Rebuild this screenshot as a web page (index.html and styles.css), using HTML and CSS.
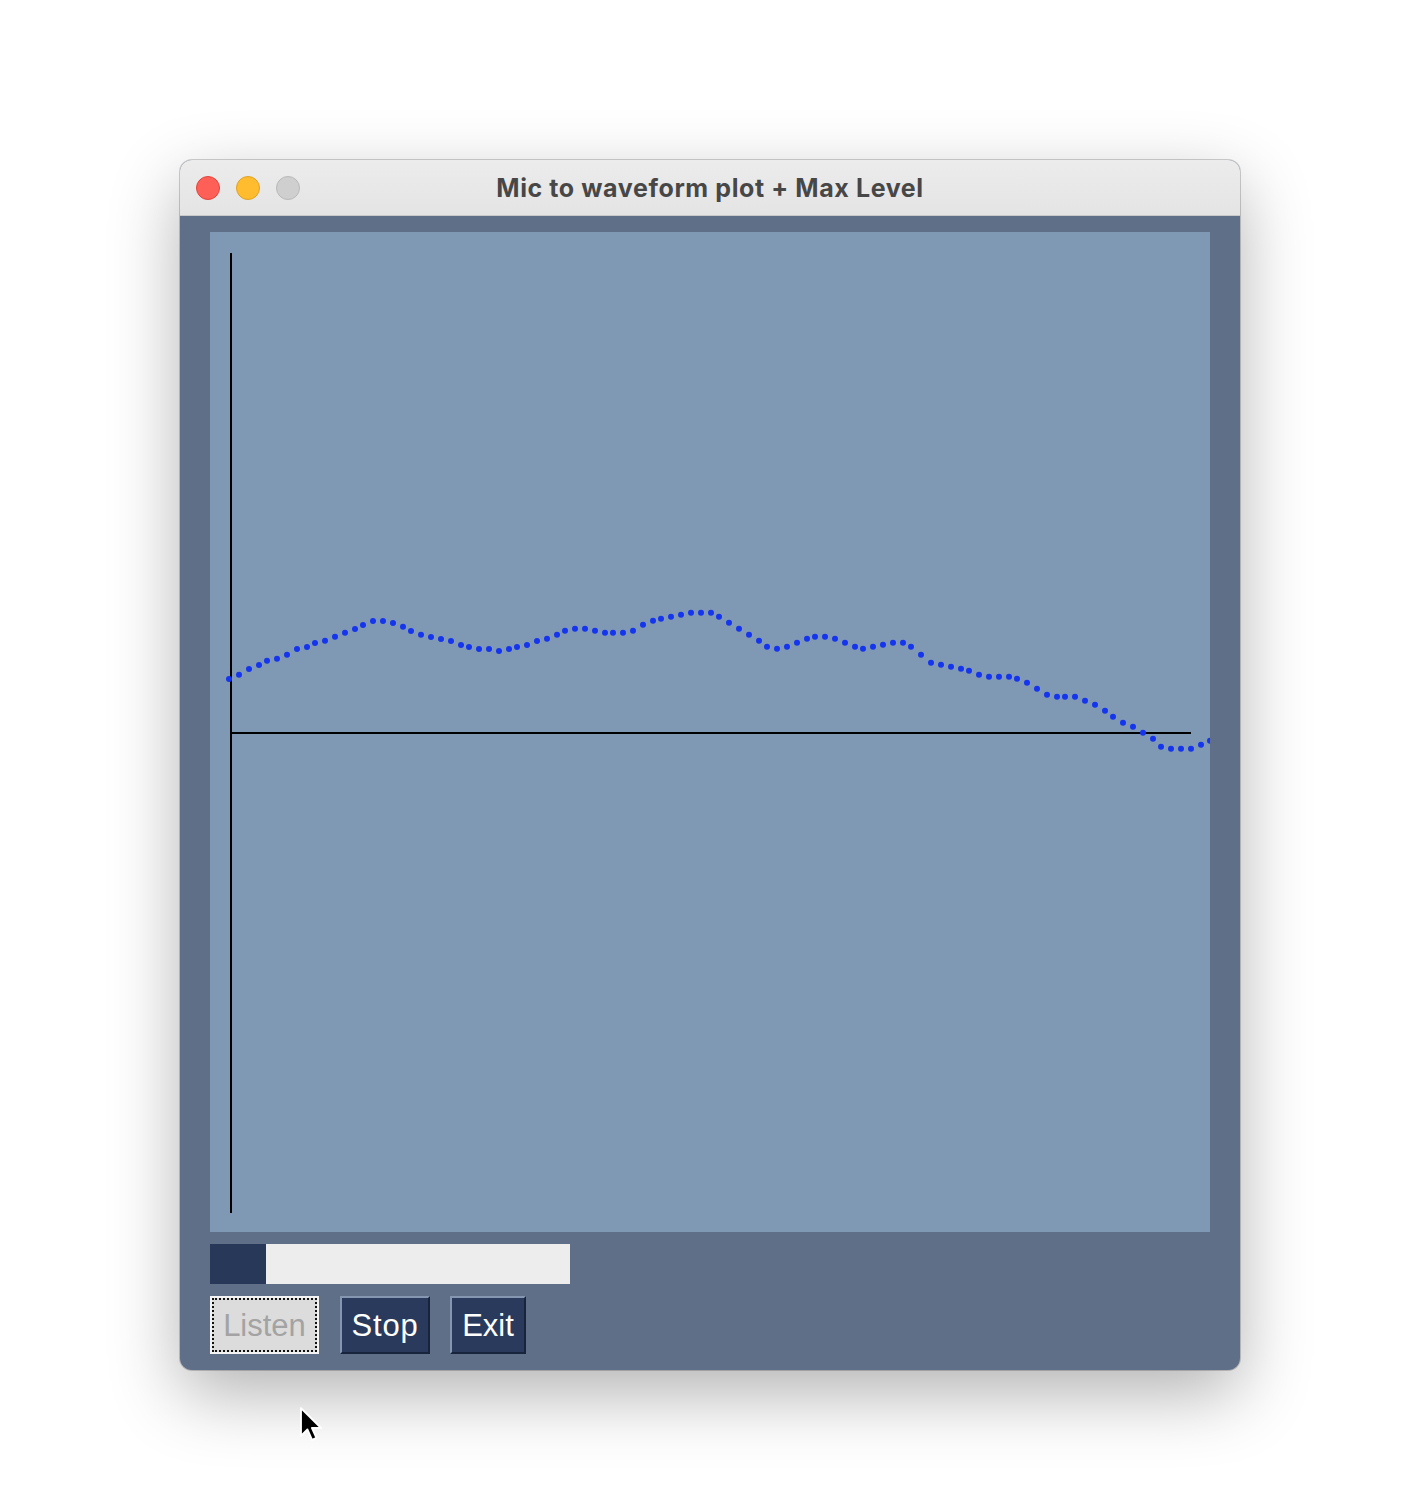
FILE: index.html
```html
<!DOCTYPE html>
<html lang="en">
<head>
<meta charset="utf-8">
<title>Mic to waveform plot + Max Level</title>
<link rel="stylesheet" href="styles.css">
</head>
<body>
<div class="window">
  <div class="titlebar">
    <div class="lights">
      <span class="light red"></span>
      <span class="light yellow"></span>
      <span class="light gray"></span>
    </div>
    <div class="title">Mic to waveform plot + Max Level</div>
    <div class="spacer"></div>
  </div>
  <div class="content">
    <svg class="plot" width="1000" height="1000" viewBox="0 0 1000 1000" xmlns="http://www.w3.org/2000/svg">
      <g transform="translate(-210 -232)">
        <line x1="231" y1="253" x2="231" y2="1213" stroke="#000" stroke-width="2"/>
        <line x1="230" y1="733" x2="1191" y2="733" stroke="#000" stroke-width="2"/>
        <g fill="#1534ee">
          <circle cx="229" cy="679" r="3"/>
          <circle cx="239" cy="674.7" r="3"/>
          <circle cx="249" cy="669" r="3"/>
          <circle cx="259" cy="665" r="3"/>
          <circle cx="267" cy="660.7" r="3"/>
          <circle cx="277" cy="658.7" r="3"/>
          <circle cx="287" cy="654.7" r="3"/>
          <circle cx="297" cy="649" r="3"/>
          <circle cx="307" cy="647" r="3"/>
          <circle cx="315" cy="643" r="3"/>
          <circle cx="325" cy="640.7" r="3"/>
          <circle cx="335" cy="636.7" r="3"/>
          <circle cx="345" cy="632.7" r="3"/>
          <circle cx="355" cy="629" r="3"/>
          <circle cx="363" cy="625" r="3"/>
          <circle cx="373" cy="621" r="3"/>
          <circle cx="383" cy="621" r="3"/>
          <circle cx="393" cy="623" r="3"/>
          <circle cx="403" cy="626.7" r="3"/>
          <circle cx="411" cy="631" r="3"/>
          <circle cx="421" cy="634.7" r="3"/>
          <circle cx="431" cy="637" r="3"/>
          <circle cx="441" cy="639" r="3"/>
          <circle cx="451" cy="641" r="3"/>
          <circle cx="461" cy="645" r="3"/>
          <circle cx="469" cy="647" r="3"/>
          <circle cx="479" cy="649" r="3"/>
          <circle cx="489" cy="649" r="3"/>
          <circle cx="499" cy="651" r="3"/>
          <circle cx="509" cy="649" r="3"/>
          <circle cx="517" cy="647" r="3"/>
          <circle cx="527" cy="645" r="3"/>
          <circle cx="537" cy="641" r="3"/>
          <circle cx="547" cy="638.7" r="3"/>
          <circle cx="557" cy="634.7" r="3"/>
          <circle cx="565" cy="630.7" r="3"/>
          <circle cx="575" cy="628.7" r="3"/>
          <circle cx="585" cy="628.7" r="3"/>
          <circle cx="595" cy="630.7" r="3"/>
          <circle cx="605" cy="632.7" r="3"/>
          <circle cx="613" cy="632.7" r="3"/>
          <circle cx="623" cy="632.7" r="3"/>
          <circle cx="633" cy="630.7" r="3"/>
          <circle cx="643" cy="624.7" r="3"/>
          <circle cx="653" cy="620.7" r="3"/>
          <circle cx="661" cy="618.7" r="3"/>
          <circle cx="671" cy="616.7" r="3"/>
          <circle cx="681" cy="614.7" r="3"/>
          <circle cx="691" cy="612.7" r="3"/>
          <circle cx="701" cy="612.7" r="3"/>
          <circle cx="711" cy="612.7" r="3"/>
          <circle cx="719" cy="616.7" r="3"/>
          <circle cx="729" cy="622.7" r="3"/>
          <circle cx="739" cy="628.7" r="3"/>
          <circle cx="749" cy="634.7" r="3"/>
          <circle cx="759" cy="640.7" r="3"/>
          <circle cx="767" cy="646.7" r="3"/>
          <circle cx="777" cy="648.7" r="3"/>
          <circle cx="787" cy="646.7" r="3"/>
          <circle cx="797" cy="642.7" r="3"/>
          <circle cx="807" cy="638.7" r="3"/>
          <circle cx="815" cy="636.7" r="3"/>
          <circle cx="825" cy="636.7" r="3"/>
          <circle cx="835" cy="638.7" r="3"/>
          <circle cx="845" cy="642.7" r="3"/>
          <circle cx="855" cy="646.7" r="3"/>
          <circle cx="863" cy="648.7" r="3"/>
          <circle cx="873" cy="646.7" r="3"/>
          <circle cx="883" cy="644.7" r="3"/>
          <circle cx="893" cy="642.7" r="3"/>
          <circle cx="903" cy="642.7" r="3"/>
          <circle cx="911" cy="646.7" r="3"/>
          <circle cx="921" cy="654.7" r="3"/>
          <circle cx="931" cy="662.7" r="3"/>
          <circle cx="941" cy="664.7" r="3"/>
          <circle cx="951" cy="666.7" r="3"/>
          <circle cx="961" cy="668.7" r="3"/>
          <circle cx="969" cy="670.7" r="3"/>
          <circle cx="979" cy="674.7" r="3"/>
          <circle cx="989" cy="676.7" r="3"/>
          <circle cx="999" cy="676.7" r="3"/>
          <circle cx="1009" cy="676.7" r="3"/>
          <circle cx="1017" cy="678.7" r="3"/>
          <circle cx="1027" cy="682.7" r="3"/>
          <circle cx="1037" cy="688.7" r="3"/>
          <circle cx="1047" cy="694.7" r="3"/>
          <circle cx="1057" cy="696.7" r="3"/>
          <circle cx="1065" cy="696.7" r="3"/>
          <circle cx="1075" cy="696.7" r="3"/>
          <circle cx="1085" cy="700.7" r="3"/>
          <circle cx="1095" cy="704.7" r="3"/>
          <circle cx="1105" cy="710.7" r="3"/>
          <circle cx="1113" cy="716.7" r="3"/>
          <circle cx="1123" cy="722.7" r="3"/>
          <circle cx="1133" cy="726.7" r="3"/>
          <circle cx="1143" cy="732.7" r="3"/>
          <circle cx="1153" cy="738.7" r="3"/>
          <circle cx="1161" cy="746.7" r="3"/>
          <circle cx="1171" cy="748.7" r="3"/>
          <circle cx="1181" cy="748.7" r="3"/>
          <circle cx="1191" cy="748.7" r="3"/>
          <circle cx="1201" cy="744.7" r="3"/>
          <circle cx="1210" cy="740.7" r="3"/>
        </g>
      </g>
    </svg>
    <div class="progress"><div class="progress-fill" style="width: 56px"></div></div>
    <div class="buttons">
      <div class="btn btn-disabled">Listen</div>
      <div class="btn btn-stop">Stop</div>
      <div class="btn btn-exit">Exit</div>
    </div>
  </div>
</div>
<svg class="cursor" width="26" height="38" viewBox="0 0 20 29" xmlns="http://www.w3.org/2000/svg">
  <path d="M1.5 1.5 L1.5 23 L6.5 18 L10 26 L13.5 24.5 L10 16.8 L17 16.8 Z" fill="#000" stroke="#fff" stroke-width="1.5" stroke-linejoin="round"/>
</svg>
</body>
</html>
```

FILE: styles.css
```css
html, body {
  margin: 0;
  padding: 0;
  background: #ffffff;
}

body {
  width: 1404px;
  height: 1506px;
  position: relative;
  overflow: hidden;
  font-family: "Liberation Sans", Arial, sans-serif;
}

.window {
  margin: 160px 0 0 180px;
  width: 1060px;
  height: 1210px;
  border-radius: 12px;
  overflow: hidden;
  background: #5e6f87;
  box-shadow: 0 0 0 1px rgba(0, 0, 0, 0.18), 0 24px 70px rgba(0, 0, 0, 0.30);
  display: flex;
  flex-direction: column;
}

.titlebar {
  height: 56px;
  flex: 0 0 56px;
  background: linear-gradient(#ececec, #e4e4e4);
  border-bottom: 1px solid #c9c9c9;
  box-sizing: border-box;
  display: grid;
  grid-template-columns: 1fr auto 1fr;
  align-items: center;
}

.lights {
  display: flex;
  gap: 16px;
  padding-left: 16px;
}

.light {
  width: 24px;
  height: 24px;
  border-radius: 50%;
  box-sizing: border-box;
}

.light.red {
  background: #fe5f57;
  border: 1px solid #e0443e;
}

.light.yellow {
  background: #febc2e;
  border: 1px solid #dea123;
}

.light.gray {
  background: #cfcfcf;
  border: 1px solid #b9b9b9;
}

.title {
  font-family: Inter, Roboto, sans-serif;
  font-weight: 700;
  font-size: 25px;
  letter-spacing: 0.6px;
  color: #474747;
  white-space: nowrap;
  padding-top: 1px;
}

.content {
  padding: 16px 30px 16px 30px;
  display: flex;
  flex-direction: column;
}

.plot {
  display: block;
  width: 1000px;
  height: 1000px;
  background: #7f99b4;
}

.progress {
  margin-top: 12px;
  width: 360px;
  height: 40px;
  background: #ededed;
  display: flex;
}

.progress-fill {
  height: 100%;
  background: #283859;
}

.buttons {
  margin-top: 12px;
  display: flex;
  gap: 21px;
  height: 58px;
}

.btn {
  box-sizing: border-box;
  height: 58px;
  display: flex;
  align-items: center;
  justify-content: center;
  font-size: 31px;
  line-height: 1;
}

.btn-disabled {
  width: 109px;
  background: #dcdcdc;
  color: #a3a3a3;
  border: 2px solid #f4f4f4;
  outline: 2px dotted #111;
  outline-offset: -4px;
}

.btn-stop,
.btn-exit {
  background: #293a5c;
  color: #ffffff;
  border: 2px solid;
  border-color: #8596b0 #18233c #18233c #8596b0;
}

.btn-stop {
  width: 90px;
  letter-spacing: 0.8px;
}

.btn-exit {
  width: 76px;
  margin-left: -1px;
}

.cursor {
  position: absolute;
  left: 299px;
  top: 1406px;
}
```
